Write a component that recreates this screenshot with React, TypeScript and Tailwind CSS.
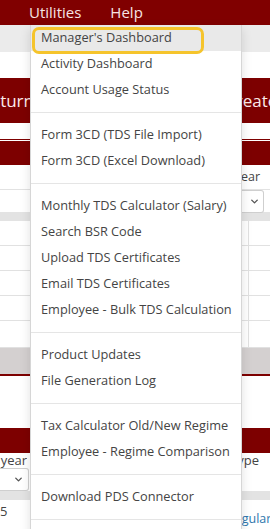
import { ChevronDown } from 'lucide-react';

const sections: string[][] = [
  ["Manager's Dashboard", 'Activity Dashboard', 'Account Usage Status'],
  ['Form 3CD (TDS File Import)', 'Form 3CD (Excel Download)'],
  [
    'Monthly TDS Calculator (Salary)',
    'Search BSR Code',
    'Upload TDS Certificates',
    'Email TDS Certificates',
    'Employee - Bulk TDS Calculation',
  ],
  ['Product Updates', 'File Generation Log'],
  ['Tax Calculator Old/New Regime', 'Employee - Regime Comparison'],
  ['Download PDS Connector'],
];

function UtilitiesMenu() {
  return (
    <div className="absolute left-[30px] top-[25px] w-[212px] bg-white border-x border-[#d6d6d6] shadow-[0_4px_10px_rgba(0,0,0,0.12)] text-[12.75px] text-[#444]">
      {sections.map((items, i) => (
        <div key={i}>
          {items.map((label, j) => (
            <div
              key={label}
              className={`h-[26px] flex items-center pl-[10px] whitespace-nowrap ${i === 0 && j === 0 ? 'bg-[#e9e9e9]' : ''}`}
            >
              {label}
            </div>
          ))}
          <div className="my-[9px] h-px bg-[#e5e5e5]" />
        </div>
      ))}
      <div className="h-[20px]" />
    </div>
  );
}

export default function App() {
  return (
    <div className="relative w-[270px] h-[529px] overflow-hidden bg-white font-['Open_Sans',sans-serif]">
      {/* Top nav */}
      <div className="h-[25px] bg-[#800000] flex items-center gap-[29px] pl-[29px] text-[15px] text-[#f7e4e4]">
        <span>Utilities</span>
        <span>Help</span>
      </div>

      {/* Page behind the menu */}
      <div className="h-[27px] bg-[#ebebeb]" />
      <div className="h-[26px]" />
      <div className="h-[45px] bg-[#7d0000] flex items-center justify-between text-[17px] text-[#fbeaea]">
        <div className="w-[34px] overflow-hidden flex justify-end whitespace-nowrap">Return</div>
        <div className="w-[45px] whitespace-nowrap">Create</div>
      </div>
      <div className="h-[16px]" />
      <div className="h-px bg-[#7d0000]" />
      <div className="h-px" />
      <div className="h-[24px] bg-[#7d0000]" />
      <div className="h-[24px] flex items-center justify-end text-[12.5px] text-[#444]">
        <span className="w-[36px] whitespace-nowrap">Year</span>
      </div>
      <div className="h-[23px] border-t border-[#e2e2e2] flex justify-end">
        <div className="w-[28px] flex">
          <div className="w-[22px] h-[23px] border border-[#cfcfcf] rounded-r-[3px] border-l-0 flex items-center justify-end pr-[3px]">
            <ChevronDown size={11} strokeWidth={3} className="text-[#555]" />
          </div>
        </div>
      </div>
      <div className="h-[9px] bg-[#e3e3e3]" />
      {[0, 1, 2, 3, 4].map((r) => (
        <div key={r} className={`flex justify-end border-b border-[#e1e1e1] ${r === 4 ? 'h-[27px]' : 'h-[25px]'}`}>
          <div className="w-[22px] border-l border-[#e1e1e1]" />
        </div>
      ))}
      <div className="h-[28px] bg-[#d4d0d0] border-b-2 border-[#7d0000]" />
      <div className="h-[52px]" />
      <div className="h-[25px] bg-[#7d0000]" />
      <div className="h-[15px] flex items-center justify-between text-[13px] text-[#444]">
        <span className="w-[27px] overflow-hidden whitespace-nowrap flex justify-end">year</span>
        <span className="w-[40px] whitespace-nowrap">Type</span>
      </div>
      <div className="h-[23px] flex items-center">
        <div className="w-[29px] h-[23px] border border-l-0 border-[#cfcfcf] rounded-r-[3px] flex items-center justify-end pr-[4px]">
          <ChevronDown size={11} strokeWidth={3} className="text-[#555]" />
        </div>
      </div>
      <div className="h-[9px] bg-[#e3e3e3]" />
      <div className="h-[27px] flex justify-between items-end text-[12.5px]">
        <span className="text-[#444] leading-[20px] self-start pt-[1px] text-[13px]">5</span>
        <span className="w-[43px] whitespace-nowrap text-[#2e77ad] leading-[16px]">Regular</span>
      </div>

      <UtilitiesMenu />

      {/* Yellow highlight annotation */}
      <div className="absolute left-[32px] top-[27px] w-[172px] h-[27px] rounded-[7px] border-[3px] border-[#f5c42c] pointer-events-none" />
    </div>
  );
}
